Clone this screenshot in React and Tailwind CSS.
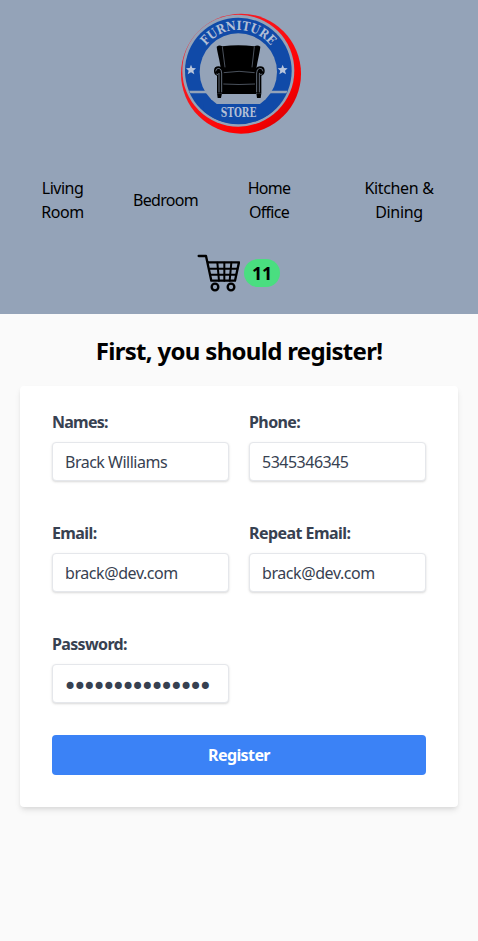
import React from "react";

function Logo() {
  return (
    <svg className="h-[135px] w-[140px]" viewBox="0 0 420 405" role="img" aria-label="Furniture Store">
      <defs>
        <linearGradient id="rim" x1="0" y1="0" x2="1" y2="1">
          <stop offset="0" stopColor="#f52a35" />
          <stop offset="0.75" stopColor="#ff0000" />
          <stop offset="1" stopColor="#b80008" />
        </linearGradient>
        <path id="arc" d="M 82 198 A 123 123 0 0 1 328 198" />
        <clipPath id="disc">
          <circle cx="205" cy="198" r="159" />
        </clipPath>
      </defs>
      <circle cx="213" cy="206" r="180" fill="url(#rim)" />
      <circle cx="205" cy="197" r="168" fill="#94a3b8" />
      <circle cx="205" cy="198" r="160" fill="#104aa8" />
      <circle cx="205" cy="201" r="116" fill="#94a3b8" />
      <g clipPath="url(#disc)">
        <path d="M40 261H122M288 261H370" stroke="#94a3b8" strokeWidth="8" />
        <path d="M100 297H310V370H100Z" fill="#104aa8" />
      </g>
      <g fill="#b2bfd6" fontFamily="'DejaVu Serif', serif" fontWeight="bold">
        <text fontSize="38" textAnchor="middle">
          <textPath href="#arc" startOffset="50%" textLength="224" lengthAdjust="spacingAndGlyphs">FURNITURE</textPath>
        </text>
        <text x="152" y="337" fontSize="37" textLength="107" lengthAdjust="spacingAndGlyphs">STORE</text>
      </g>
      <g fill="#b9c6dc">
        <path d="M63 179l4 10 11 1-8 7 3 11-10-6-10 6 3-11-8-7 11-1z" />
        <path d="M338 179l4 10 11 1-8 7 3 11-10-6-10 6 3-11-8-7 11-1z" />
      </g>
      <g fill="#000">
        <path d="M153 193C149 164 142 143 140 125Q148 119 157 124Q205 117 253 124Q263 119 271 125C269 145 263 164 259 193L252 211H159Z" />
        <path d="M132 199Q131 184 146 184Q160 185 161 202L158 265H141V212Q132 209 132 199ZM284 199Q285 184 270 184Q255 185 254 202L257 265H274V212Q284 209 284 199Z" />
        <path d="M156 204Q207 194 258 204V267H156ZM141 265H156L153 279H143ZM259 265H274L272 279H261Z" />
      </g>
      <g fill="none" stroke="#94a3b8" strokeWidth="2">
        <path d="M157 125C159 146 163 166 165 187M253 125C251 146 248 166 246 187" strokeWidth="1.5" />
        <path d="M137 199Q138 189 147 190Q155 192 155 204V262M279 199Q278 189 269 190Q260 192 260 204V262" />
        <path d="M139 207Q144 211 147 205V262M277 207Q272 211 268 205V262" />
        <path d="M160 237Q207 240 255 237M161 203Q207 195 254 203" strokeWidth="1.5" />
      </g>
    </svg>
  );
}

function Cart() {
  return (
    <svg className="h-10 w-11" viewBox="0 0 132 120" fill="none" stroke="#000" strokeLinecap="round" strokeLinejoin="round" aria-hidden="true">
      <path d="M8 9H30L46 83H117L129 28H37" strokeWidth="7" />
      <path d="M42 47H124M45 65H120M64 29L69 83M85 29V83M106 29L101 83" strokeWidth="6" />
      <circle cx="57" cy="102" r="10" strokeWidth="7" />
      <circle cx="105" cy="102" r="10" strokeWidth="7" />
    </svg>
  );
}

function Field({ label, value, type = "text", labelClass, inputClass }) {
  return (
    <label className="block h-[71px]">
      <span className={`block h-6 text-base leading-6 font-bold whitespace-nowrap ${labelClass}`}>{label}</span>
      <input
        type={type}
        defaultValue={value}
        className={`mt-2 block h-[39px] w-full rounded border border-[#e5e7eb] bg-white text-[#374151] shadow-[0_1px_3px_rgba(0,0,0,0.1),0_1px_2px_rgba(0,0,0,0.06)] outline-none ${inputClass}`}
      />
    </label>
  );
}

export default function App() {
  return (
    <div className="min-h-screen bg-[#fafafa] font-['Noto_Sans','Open_Sans',sans-serif] text-black">
      <header className="h-[314px] bg-[#94a3b8] pt-[5px]">
        <div className="flex justify-center pl-0.5">
          <Logo />
        </div>
        <nav className="mt-9 flex h-12 items-center text-center text-base leading-6">
          <a className="ml-[37px] w-[51px] tracking-[-0.5px]">Living Room</a>
          <a className="ml-[40px] w-[75px] tracking-[-0.7px]">Bedroom</a>
          <a className="ml-[41px] w-[50px] tracking-[-0.7px]">Home Office</a>
          <a className="ml-[65px] w-[80px] tracking-[-0.35px]">Kitchen &amp; Dining</a>
        </nav>
        <div className="mt-[29px] flex items-center justify-center pr-0.5">
          <Cart />
          <span className="ml-1 flex h-7 w-9 items-center justify-center rounded-full bg-[#4ade80] text-lg font-bold tracking-[-0.3px]">11</span>
        </div>
      </header>
      <main className="px-5 pt-[21px]">
        <h1 className="h-8 text-center text-2xl leading-8 font-bold tracking-[-0.69px]">First, you should register!</h1>
        <form className="mt-[19px] h-[421px] rounded bg-white px-8 pt-6 text-[#374151] shadow-[0_4px_6px_-1px_rgba(0,0,0,0.1),0_2px_4px_-1px_rgba(0,0,0,0.06)]">
          <div className="grid grid-cols-2 gap-x-5 gap-y-10">
            <Field label="Names:" value="Brack Williams" labelClass="tracking-[-0.75px]" inputClass="px-3 text-base tracking-[-0.5px]" />
            <Field label="Phone:" value="5345346345" labelClass="tracking-[-0.6px]" inputClass="px-3 text-base tracking-[-0.5px]" />
            <Field label="Email:" value="brack@dev.com" labelClass="tracking-[-0.6px]" inputClass="px-3 text-base tracking-[-0.42px]" />
            <Field label="Repeat Email:" value="brack@dev.com" labelClass="tracking-[-0.55px]" inputClass="px-3 text-base tracking-[-0.42px]" />
            <Field label="Password:" value="brack-password1" type="password" labelClass="tracking-[-0.65px]" inputClass="px-[10px] pt-1.5 font-['DejaVu_Sans',sans-serif] text-[24px] tracking-[-4.5px]" />
          </div>
          <button type="button" className="mt-8 block h-10 w-full rounded bg-[#3b82f6] text-base font-bold tracking-[-0.6px] text-white">
            Register
          </button>
        </form>
      </main>
    </div>
  );
}
